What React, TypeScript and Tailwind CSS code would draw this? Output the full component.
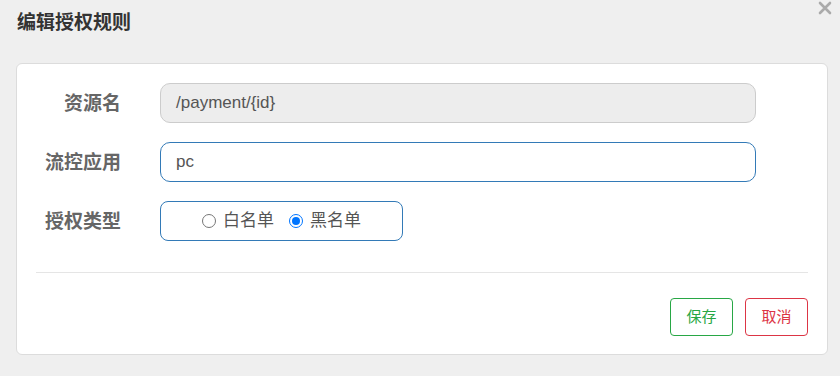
import React, { useState } from 'react';

const font = { fontFamily: '"Liberation Sans", "Noto Sans CJK SC", sans-serif' };

export default function App() {
  const [app, setApp] = useState('pc');
  const [strategy, setStrategy] = useState(1);

  return (
    <div className="w-[840px] h-[376px] bg-[#efefef] relative" style={font}>
      <div className="h-[63px] pl-[17px] pt-[10px]">
        <h2 className="text-[19px] leading-[26px] font-bold text-[#333]">编辑授权规则</h2>
      </div>
      <button className="absolute top-[1px] right-[8px]">
        <svg width="14" height="14" viewBox="0 0 14 14">
          <path d="M2 2L12 12M12 2L2 12" stroke="#aaaaaa" strokeWidth="2.6" strokeLinecap="round" />
        </svg>
      </button>

      <div className="mx-[16px] w-[812px] h-[292px] bg-white border border-[#dcdcdc] rounded-[6px] pt-[19px]">
        <div className="flex flex-col gap-[19px]">
          <div className="flex items-center">
            <label className="w-[104px] pt-[3px] text-right text-[19px] font-bold text-[#666]">资源名</label>
            <div className="ml-[39px] w-[596px] h-[40px] bg-[#ededed] border border-[#cccccc] rounded-[10px] flex items-center pl-[15px] text-[17px] text-[#555]">
              /payment/{'{id}'}
            </div>
          </div>
          <div className="flex items-center">
            <label className="w-[104px] pt-[3px] text-right text-[19px] font-bold text-[#666]">流控应用</label>
            <input
              value={app}
              onChange={(e) => setApp(e.target.value)}
              className="ml-[39px] w-[596px] h-[40px] bg-white border border-[#337ab7] rounded-[10px] pl-[15px] text-[17px] text-[#555] outline-none"
            />
          </div>
          <div className="flex items-center">
            <label className="w-[104px] pt-[3px] text-right text-[19px] font-bold text-[#666]">授权类型</label>
            <div className="ml-[39px] w-[243px] h-[40px] border border-[#337ab7] rounded-[8px] flex items-center justify-center gap-[15px] text-[17px] text-[#555]">
              {['白名单', '黑名单'].map((t, i) => (
                <label key={t} className="flex items-center gap-[7px] cursor-pointer" onClick={() => setStrategy(i)}>
                  <span
                    className={
                      strategy === i
                        ? 'w-[14px] h-[14px] rounded-full border border-[#0075ff] flex items-center justify-center'
                        : 'w-[14px] h-[14px] rounded-full border border-[#767676]'
                    }
                  >
                    {strategy === i && <span className="w-[8px] h-[8px] rounded-full bg-[#0075ff]" />}
                  </span>
                  {t}
                </label>
              ))}
            </div>
          </div>
        </div>

        <div className="mx-[19px] mt-[31px] border-t border-[#e5e5e5]" />

        <div className="flex justify-end gap-[12px] pr-[19px] mt-[25px]">
          <button className="w-[63px] h-[38px] border border-[#28a745] rounded-[4px] text-[15px] text-[#28a745]">保存</button>
          <button className="w-[63px] h-[38px] border border-[#dc3545] rounded-[4px] text-[15px] text-[#dc3545]">取消</button>
        </div>
      </div>
    </div>
  );
}
